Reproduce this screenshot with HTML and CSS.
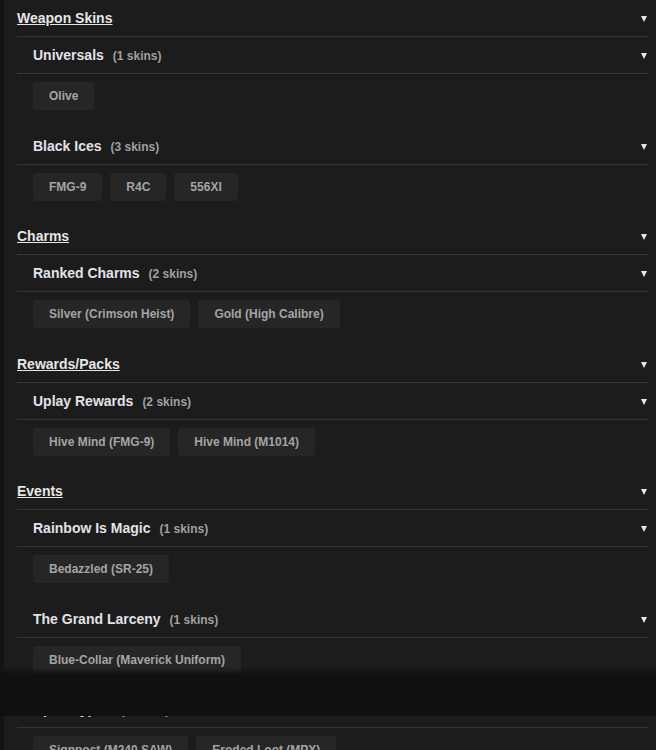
FILE: index.html
```html
<!DOCTYPE html>
<html lang="en">
<head>
    <meta charset="UTF-8" />
    <meta name="viewport" content="width=device-width, initial-scale=1.0" />
    <title>Skins</title>
    <link rel="stylesheet" href="styles.css">
</head>
<body>
    <div class="panel">

        <div class="cat">
            <div class="cat-head"><a class="cat-title">Weapon Skins</a><span class="arrow"></span></div>
            <div class="sub">
                <div class="sub-head"><span><b>Universals</b><small>(1 skins)</small></span><span class="arrow"></span></div>
                <div class="chips">
                    <span class="chip">Olive</span>
                </div>
            </div>
            <div class="sub">
                <div class="sub-head"><span><b>Black Ices</b><small>(3 skins)</small></span><span class="arrow"></span></div>
                <div class="chips">
                    <span class="chip">FMG-9</span>
                    <span class="chip">R4C</span>
                    <span class="chip">556XI</span>
                </div>
            </div>
        </div>

        <div class="cat">
            <div class="cat-head"><a class="cat-title">Charms</a><span class="arrow"></span></div>
            <div class="sub">
                <div class="sub-head"><span><b>Ranked Charms</b><small>(2 skins)</small></span><span class="arrow"></span></div>
                <div class="chips">
                    <span class="chip">Silver (Crimson Heist)</span>
                    <span class="chip">Gold (High Calibre)</span>
                </div>
            </div>
        </div>

        <div class="cat">
            <div class="cat-head"><a class="cat-title">Rewards/Packs</a><span class="arrow"></span></div>
            <div class="sub">
                <div class="sub-head"><span><b>Uplay Rewards</b><small>(2 skins)</small></span><span class="arrow"></span></div>
                <div class="chips">
                    <span class="chip">Hive Mind (FMG-9)</span>
                    <span class="chip">Hive Mind (M1014)</span>
                </div>
            </div>
        </div>

        <div class="cat">
            <div class="cat-head"><a class="cat-title">Events</a><span class="arrow"></span></div>
            <div class="sub">
                <div class="sub-head"><span><b>Rainbow Is Magic</b><small>(1 skins)</small></span><span class="arrow"></span></div>
                <div class="chips">
                    <span class="chip">Bedazzled (SR-25)</span>
                </div>
            </div>
            <div class="sub">
                <div class="sub-head"><span><b>The Grand Larceny</b><small>(1 skins)</small></span><span class="arrow"></span></div>
                <div class="chips">
                    <span class="chip">Blue-Collar (Maverick Uniform)</span>
                </div>
            </div>
            <div class="sub">
                <div class="sub-head"><span><b>Apocalypse</b><small>(2 skins)</small></span><span class="arrow"></span></div>
                <div class="chips">
                    <span class="chip">Signpost (M240 SAW)</span>
                    <span class="chip">Eroded Loot (MPX)</span>
                </div>
            </div>
        </div>

    </div>

    <div class="fade"></div>
</body>
</html>
```

FILE: styles.css
```css
body {
    margin: 0;
    background-color: #141414;
    font-family: "Liberation Sans", Arial, sans-serif;
    color: #e4e4e4;
}
.panel {
    margin-left: 4px;
    padding: 0 8px 0 13px;
    background-color: #1c1c1c;
    min-height: 800px;
}
.cat-head, .sub-head {
    height: 36px;
    display: flex;
    align-items: center;
    justify-content: space-between;
    border-bottom: 1px solid #363636;
    padding-right: 1px;
}
.cat-title {
    font-size: 14px;
    font-weight: bold;
    color: #e6e6e6;
    text-decoration: underline;
}
.sub-head {
    padding-left: 16px;
}
.sub-head b {
    font-size: 14px;
    color: #e2e2ea;
}
.sub-head small {
    font-size: 12px;
    font-weight: bold;
    color: #a0a0a0;
    margin-left: 9px;
}
.arrow {
    width: 0;
    height: 0;
    border-left: 3.5px solid transparent;
    border-right: 3.5px solid transparent;
    border-top: 6px solid #e8e8e8;
    margin-top: 2px;
}
.chips {
    display: flex;
    flex-wrap: wrap;
    gap: 8px 8px;
    padding: 8px 16px 17.5px;
}
.chip {
    background-color: #262626;
    border-radius: 3px;
    padding: 0 16px;
    line-height: 28px;
    font-size: 12px;
    font-weight: bold;
    color: #a4a4a4;
}
.fade {
    position: absolute;
    left: 0;
    right: 0;
    top: 667px;
    height: 49px;
    background: linear-gradient(to bottom, rgba(16, 16, 16, 0) 0, #101010 8px, #101010 100%);
}
```
